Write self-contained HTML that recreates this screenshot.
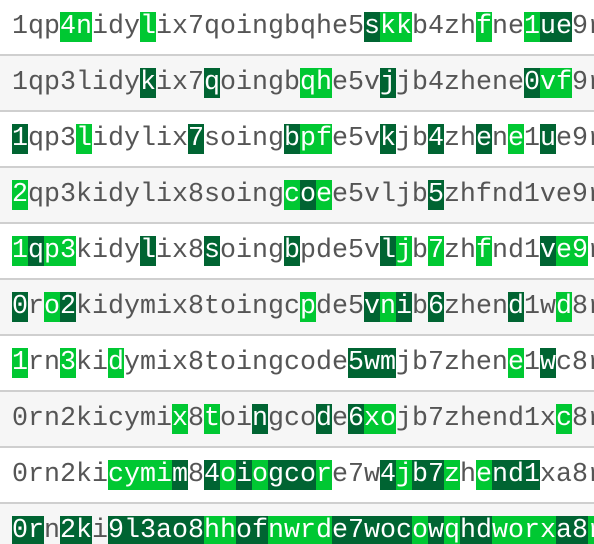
<!DOCTYPE html>
<html><head><meta charset="utf-8"><style>
html,body{margin:0;padding:0;background:#fff;width:594px;height:544px;overflow:hidden}
.r{height:42px;padding:12px 0 0 12px;border-bottom:2px solid #cfcfcf;white-space:pre;overflow:hidden;font-family:"Liberation Mono","Courier New",monospace;font-size:26.67px;line-height:30px;color:#555}
.g{background:#f6f6f6}
.r span{display:inline-block;height:30px;line-height:30px;vertical-align:top;color:#fff}
.L{background:#00c832}
.D{background:#006432}
</style></head><body>
<div class="r">1qp<span class="L">4n</span>idy<span class="L">l</span>ix7qoingbqhe5<span class="D">s</span><span class="L">kk</span>b4zh<span class="L">f</span>ne<span class="L">1</span><span class="D">ue</span>9r</div>
<div class="r g">1qp3lidy<span class="D">k</span>ix7<span class="D">q</span>oingb<span class="L">qh</span>e5v<span class="D">j</span>jb4zhene<span class="D">0</span><span class="L">vf</span>9r</div>
<div class="r"><span class="D">1</span>qp3<span class="L">l</span>idylix<span class="D">7</span>soing<span class="D">b</span><span class="L">pf</span>e5v<span class="D">k</span>jb<span class="D">4</span>zh<span class="D">e</span>n<span class="L">e</span>1<span class="D">u</span>e9r</div>
<div class="r g"><span class="L">2</span>qp3kidylix8soing<span class="L">c</span><span class="D">o</span><span class="L">e</span>e5vljb<span class="D">5</span>zhfnd1ve9r</div>
<div class="r"><span class="L">1</span><span class="D">q</span><span class="L">p3</span>kidy<span class="D">l</span>ix8<span class="D">s</span>oing<span class="D">b</span>pde5v<span class="D">l</span><span class="L">j</span>b<span class="L">7</span>zh<span class="L">f</span>nd1<span class="D">v</span><span class="L">e9</span>r</div>
<div class="r g"><span class="D">0</span>r<span class="L">o</span><span class="D">2</span>kidymix8toingc<span class="L">p</span>de5<span class="D">v</span><span class="L">n</span><span class="D">i</span>b<span class="D">6</span>zhen<span class="D">d</span>1w<span class="L">d</span>8r</div>
<div class="r"><span class="L">1</span>rn<span class="L">3</span>ki<span class="L">d</span>ymix8toingcode<span class="D">5wm</span>jb7zhen<span class="L">e</span>1<span class="D">w</span>c8r</div>
<div class="r g">0rn2kicymi<span class="L">x</span>8<span class="L">t</span>oi<span class="D">n</span>gco<span class="D">d</span>e<span class="D">6</span><span class="L">xo</span>jb7zhend1x<span class="L">c</span>8r</div>
<div class="r">0rn2ki<span class="L">cymi</span><span class="D">m</span>8<span class="D">4</span><span class="L">o</span><span class="D">i</span><span class="L">o</span><span class="D">gco</span><span class="L">r</span>e7w<span class="D">4</span><span class="L">j</span><span class="D">b7</span><span class="L">z</span>h<span class="L">e</span><span class="D">nd1</span>xa8r</div>
<div class="r g"><span class="D">0r</span>n<span class="D">2k</span>i<span class="D">9l3ao8</span><span class="L">hh</span><span class="D">of</span><span class="L">nwrd</span><span class="D">e7woc</span><span class="L">o</span><span class="D">w</span><span class="L">q</span><span class="D">hd</span><span class="L">worx</span><span class="D">a8</span><span class="L">r</span></div>
</body></html>
